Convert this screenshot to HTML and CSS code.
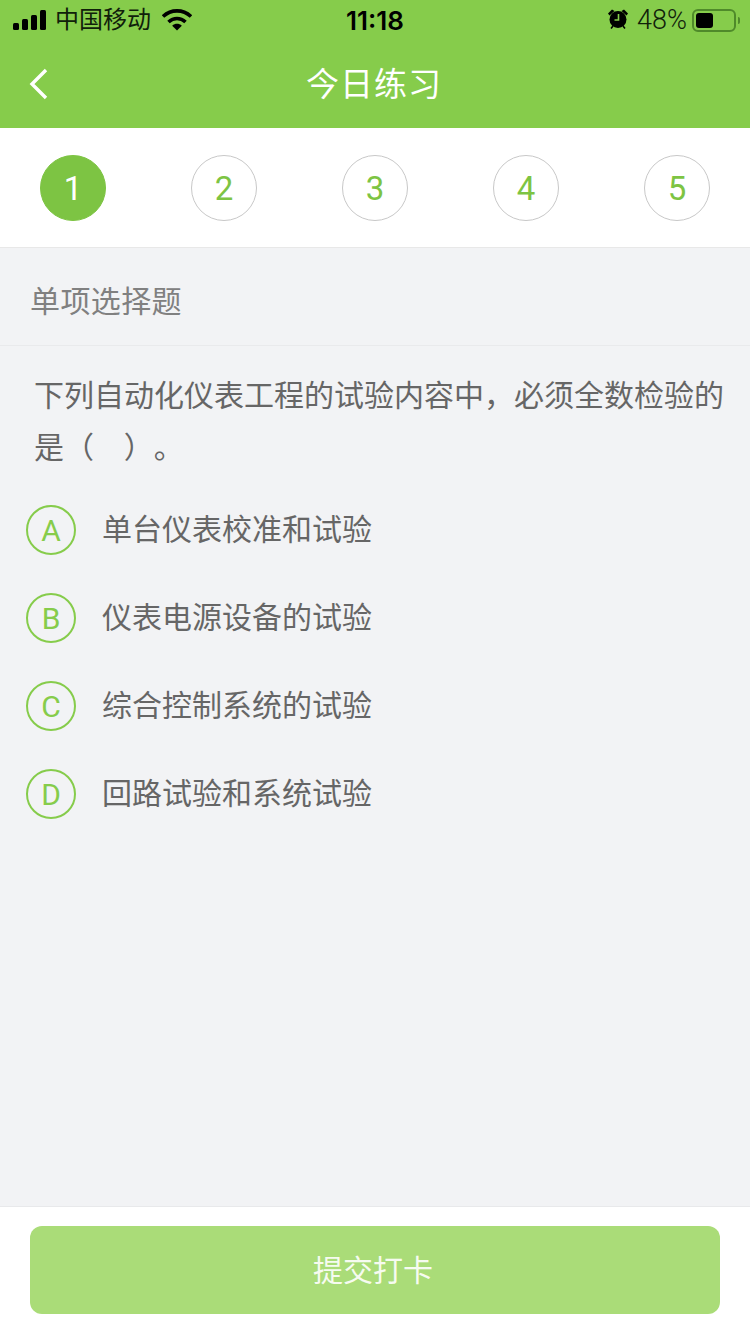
FILE: index.html
```html
<!DOCTYPE html>
<html>
<head>
	<meta charset="utf-8">
	<meta name="viewport" content="width=device-width, initial-scale=1">
	<title>今日练习</title>
	<link rel="stylesheet" href="styles.css">
</head>
<body>
	<div class="page">
		<div class="header">
			<div class="statusbar">
				<div class="status_left">
					<svg class="signal" width="33" height="20" viewBox="0 0 33 20">
						<rect x="0" y="13" width="6" height="7" rx="1.5"/>
						<rect x="9" y="9" width="6" height="11" rx="1.5"/>
						<rect x="18" y="5" width="6" height="15" rx="1.5"/>
						<rect x="27" y="0" width="6" height="20" rx="1.5"/>
					</svg>
					<span class="carrier">中国移动</span>
					<svg class="wifi" width="30" height="22" viewBox="0 0 30 22">
						<path d="M1 7.5 C9 0 21 0 29 7.5" fill="none" stroke="#000" stroke-width="3.6"/>
						<path d="M6.5 13 C11.5 8.4 18.5 8.4 23.5 13" fill="none" stroke="#000" stroke-width="3.6"/>
						<path d="M10.2 16.8 C13 14.2 17 14.2 19.8 16.8 L15 21.5 Z"/>
					</svg>
				</div>
				<div class="status_time">11:18</div>
				<div class="status_right">
					<svg class="alarm" width="22" height="22" viewBox="0 0 22 22">
						<circle cx="11" cy="11.5" r="8.5"/>
						<path d="M1 5.5 L5 1.5 L7.5 3 L2.5 7.5 Z M21 5.5 L17 1.5 L14.5 3 L19.5 7.5 Z"/>
						<path d="M4 20.5 L6 18 M18 20.5 L16 18" stroke="#000" stroke-width="1.6"/>
						<path d="M11.5 6 V12 H7.5" fill="none" stroke="#86cc4b" stroke-width="1.6"/>
					</svg>
					<span class="battery_text">48%</span>
					<div class="battery">
						<div class="battery_level"></div>
					</div>
					<div class="battery_cap"></div>
				</div>
			</div>
			<div class="navbar">
				<svg class="back" width="20" height="32" viewBox="0 0 20 32">
					<path d="M17 2 L3 16 L17 30" fill="none" stroke="#fff" stroke-width="3.4"/>
				</svg>
				<div class="nav_title">今日练习</div>
			</div>
		</div>

		<div class="steps">
			<div class="step step_active">1</div>
			<div class="step">2</div>
			<div class="step">3</div>
			<div class="step">4</div>
			<div class="step">5</div>
		</div>

		<div class="main">
			<div class="qtype">单项选择题</div>
			<div class="question">下列自动化仪表工程的试验内容中，必须全数检验的是（&nbsp;&nbsp;&nbsp;&nbsp;）。</div>
			<div class="options">
				<div class="option"><div class="letter">A</div><div class="option_text">单台仪表校准和试验</div></div>
				<div class="option"><div class="letter">B</div><div class="option_text">仪表电源设备的试验</div></div>
				<div class="option"><div class="letter">C</div><div class="option_text">综合控制系统的试验</div></div>
				<div class="option"><div class="letter">D</div><div class="option_text">回路试验和系统试验</div></div>
			</div>
		</div>

		<div class="footer">
			<button type="button" class="submit">提交打卡</button>
		</div>
	</div>
</body>
</html>
```

FILE: styles.css
```css
body
{
	margin: 0;
	font-family: "Roboto", "Noto Sans CJK SC", sans-serif;
	background-color: #f2f3f5;
}
.page
{
	width: 750px;
	height: 1334px;
	display: flex;
	flex-direction: column;
	overflow: hidden;
}

/* header */
.header
{
	height: 128px;
	background-color: #86cc4b;
}
.statusbar
{
	height: 40px;
	display: grid;
	grid-template-columns: 1fr auto 1fr;
	align-items: center;
	color: #000;
}
.status_left
{
	display: flex;
	align-items: center;
	padding-left: 13px;
}
.carrier
{
	font-size: 24px;
	line-height: 24px;
	margin-left: 9px;
	color: #10200a;
}
.wifi
{
	margin-left: 11px;
}
.status_time
{
	font-size: 26px;
	font-family: "Inter", "Liberation Sans", sans-serif;
	font-weight: 600;
}
.status_right
{
	display: flex;
	align-items: center;
	justify-content: flex-end;
	padding-right: 10px;
}
.alarm
{
	margin-top: -2px;
}
.battery_text
{
	font-size: 27px;
	font-weight: 300;
	margin-left: 8px;
	margin-right: 5px;
	color: #10200a;
}
.battery
{
	width: 44px;
	height: 23px;
	box-sizing: border-box;
	border: 2px solid #4f8a2a;
	border-radius: 6px;
	padding: 2px;
}
.battery_level
{
	width: 17px;
	height: 15px;
	background-color: #000;
	border-radius: 3px;
}
.battery_cap
{
	width: 2px;
	height: 7px;
	margin-left: 2px;
	background-color: #4f8a2a;
	border-radius: 0 2px 2px 0;
}
.navbar
{
	height: 88px;
	display: flex;
	align-items: center;
	justify-content: center;
	position: relative;
}
.back
{
	position: absolute;
	left: 29px;
	top: 28px;
}
.nav_title
{
	font-size: 33px;
	color: #fff;
	letter-spacing: 1px;
	margin-top: -4px;
	margin-right: 2px;
}

/* step circles */
.steps
{
	height: 120px;
	box-sizing: border-box;
	padding: 27px 40px 0;
	background-color: #fff;
	border-bottom: 1px solid #e8e8e8;
	display: flex;
	justify-content: space-between;
}
.step
{
	width: 66px;
	height: 66px;
	box-sizing: border-box;
	border: 1px solid #c8c8c8;
	border-radius: 50%;
	display: flex;
	align-items: center;
	justify-content: center;
	font-size: 33px;
	color: #7dc443;
}
.step_active
{
	background-color: #7dc443;
	border-color: #7dc443;
	color: #fff;
}

/* question */
.main
{
	flex: 1;
}
.qtype
{
	height: 98px;
	box-sizing: border-box;
	padding: 4px 30px 0;
	border-bottom: 1px solid #e9eaec;
	display: flex;
	align-items: center;
	font-size: 30px;
	letter-spacing: 0.4px;
	color: #808080;
}
.question
{
	padding: 24px 24px 0 34px;
	font-size: 30px;
	line-height: 52px;
	color: #666;
	text-spacing-trim: space-all;
}
.options
{
	padding: 12px 0 0 26px;
}
.option
{
	height: 88px;
	display: flex;
	align-items: center;
}
.letter
{
	width: 50px;
	height: 50px;
	box-sizing: border-box;
	border: 2px solid #86cc4b;
	border-radius: 50%;
	display: flex;
	align-items: center;
	justify-content: center;
	font-size: 30px;
	color: #86cc4b;
}
.option_text
{
	margin-left: 26px;
	margin-top: -6px;
	font-size: 30px;
	color: #666;
}

/* bottom button */
.footer
{
	height: 128px;
	box-sizing: border-box;
	padding: 19px 30px 0;
	background-color: #fff;
	border-top: 1px solid #e8e9eb;
}
.submit
{
	width: 690px;
	height: 88px;
	border: none;
	border-radius: 12px;
	background-color: #aadc78;
	color: #f6fbf0;
	font-family: inherit;
	font-size: 30px;
	padding: 0 4px 4px 0;
}
```
